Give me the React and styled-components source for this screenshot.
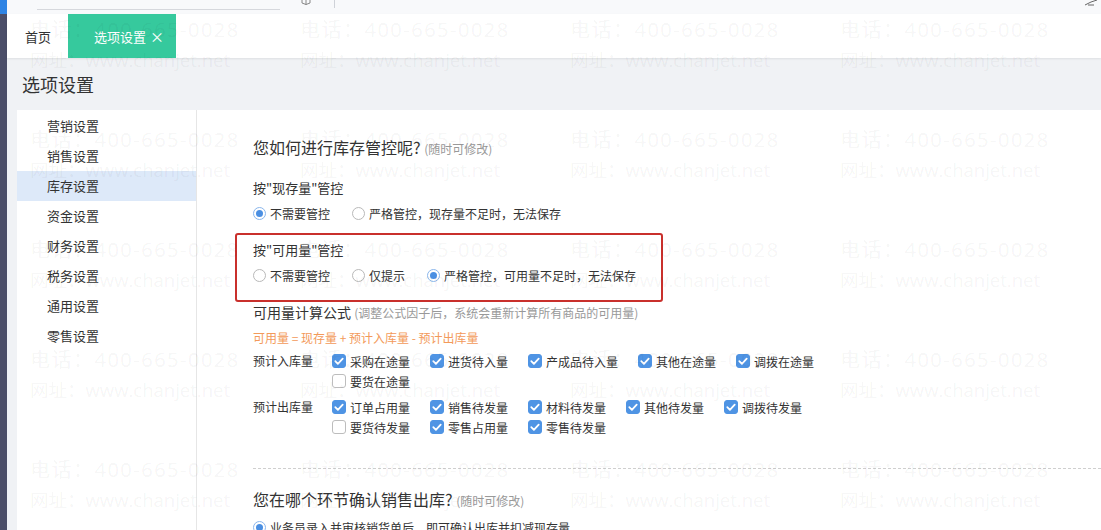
import React from "react";
import styled, { createGlobalStyle } from "styled-components";

const GlobalStyle = createGlobalStyle`
  html, body {
    margin: 0;
    padding: 0;
    height: 530px;
    overflow: hidden;
    background: #f0f2f5;
  }
  body {
    font-family: "Noto Sans CJK SC", "Microsoft YaHei", sans-serif;
    color: #333;
  }
  * { box-sizing: border-box; }
`;

const menus = ["营销设置", "销售设置", "库存设置", "资金设置", "财务设置", "税务设置", "通用设置", "零售设置"];

const inItems = [
  { label: "采购在途量", on: true },
  { label: "进货待入量", on: true },
  { label: "产成品待入量", on: true },
  { label: "其他在途量", on: true },
  { label: "调拨在途量", on: true },
  { label: "要货在途量", on: false },
];

const outItems = [
  { label: "订单占用量", on: true },
  { label: "销售待发量", on: true },
  { label: "材料待发量", on: true },
  { label: "其他待发量", on: true },
  { label: "调拨待发量", on: true },
  { label: "要货待发量", on: false },
  { label: "零售占用量", on: true },
  { label: "零售待发量", on: true },
];

const Radio = ({ checked, children }) => (
  <RadioItem>
    <RadioDot checked={checked} />
    {children}
  </RadioItem>
);

const Check = ({ on, children }) => (
  <CheckItem>
    <CheckBox on={on}>
      {on && (
        <svg viewBox="0 0 14 14" width="14" height="14">
          <path d="M3.3 7.2l2.6 2.6 4.8-5.2" fill="none" stroke="#fff" strokeWidth="1.8" strokeLinecap="round" strokeLinejoin="round" />
        </svg>
      )}
    </CheckBox>
    {children}
  </CheckItem>
);

const App = () => {
  const marks = [];
  for (let r = 0; r < 5; r++) {
    for (let c = 0; c < 4; c++) {
      marks.push(
        <Mark key={`${r}-${c}`}>
          <MarkLine phone>电话：400-665-0028</MarkLine>
          <MarkLine>网址：www.chanjet.net</MarkLine>
        </Mark>
      );
    }
  }

  return (
    <Page>
      <GlobalStyle />
      <LeftRail />
      <Workspace>
        <TopBar>
          <SearchLine />
          <TopGlyph viewBox="0 0 12 6" width="12" height="6">
            <path d="M2 0v3M6 0v5M10 0v3M2 3q4 3 8 0" fill="none" stroke="#888" strokeWidth="1" />
          </TopGlyph>
          <TopSep />
          <Spacer />
          <TopGlyph viewBox="0 0 14 6" width="14" height="6" right>
            <path d="M1 5l6-3 6-2M4 5h6" fill="none" stroke="#666" strokeWidth="1" />
          </TopGlyph>
        </TopBar>

        <TabBar>
          <Tab>首页</Tab>
          <Tab active>
            选项设置 <Close>×</Close>
          </Tab>
        </TabBar>

        <TitleBar>选项设置</TitleBar>

        <Panel>
          <Sidebar>
            {menus.map((m) => (
              <MenuItem key={m} active={m === "库存设置"}>
                {m}
              </MenuItem>
            ))}
          </Sidebar>

          <Main>
            <SectionTitle>
              您如何进行库存管控呢? <Note>(随时可修改)</Note>
            </SectionTitle>

            <GroupLabel>按"现存量"管控</GroupLabel>
            <RadioRow>
              <Radio checked>不需要管控</Radio>
              <Radio>严格管控，现存量不足时，无法保存</Radio>
            </RadioRow>

            <Highlight>
              <GroupLabel flush>按"可用量"管控</GroupLabel>
              <RadioRow>
                <Radio>不需要管控</Radio>
                <Radio>仅提示</Radio>
                <Radio checked>严格管控，可用量不足时，无法保存</Radio>
              </RadioRow>
            </Highlight>

            <FormulaTitle>
              可用量计算公式 <Note>(调整公式因子后，系统会重新计算所有商品的可用量)</Note>
            </FormulaTitle>
            <Formula>可用量 = 现存量 + 预计入库量 - 预计出库量</Formula>

            <CheckGroup>
              <CheckLabel>预计入库量</CheckLabel>
              <CheckList>
                {inItems.map((i) => (
                  <Check key={i.label} on={i.on}>
                    {i.label}
                  </Check>
                ))}
              </CheckList>
            </CheckGroup>
            <CheckGroup spaced>
              <CheckLabel>预计出库量</CheckLabel>
              <CheckList>
                {outItems.map((i) => (
                  <Check key={i.label} on={i.on}>
                    {i.label}
                  </Check>
                ))}
              </CheckList>
            </CheckGroup>

            <Divider />

            <SectionTitle second>
              您在哪个环节确认销售出库? <Note>(随时可修改)</Note>
            </SectionTitle>
            <RadioRow>
              <Radio checked>业务员录入并审核销货单后，即可确认出库并扣减现存量</Radio>
            </RadioRow>
          </Main>
        </Panel>
      </Workspace>

      <Watermark>{marks}</Watermark>
    </Page>
  );
};

const Page = styled.div`
  position: relative;
  display: flex;
  width: 1101px;
  height: 530px;
  overflow: hidden;
`;

const LeftRail = styled.div`
  width: 7px;
  flex-shrink: 0;
  background: linear-gradient(to bottom, #2f84e4 0, #2f84e4 14px, #4b4e68 14px);
`;

const Workspace = styled.div`
  flex: 1;
  display: flex;
  flex-direction: column;
  min-width: 0;
  background: #f0f2f5;
`;

const TopBar = styled.div`
  height: 14px;
  flex-shrink: 0;
  display: flex;
  align-items: flex-start;
  background: #f8f9fb;
  padding-left: 30px;
`;

const SearchLine = styled.div`
  width: 243px;
  height: 10px;
  border-bottom: 1px solid #d6d8dd;
`;

const TopGlyph = styled.svg`
  margin-left: ${(p) => (p.right ? "0" : "20px")};
  margin-right: ${(p) => (p.right ? "3px" : "0")};
`;

const TopSep = styled.div`
  width: 1px;
  height: 8px;
  background: #cfd2d8;
  margin-left: 22px;
`;

const Spacer = styled.div`
  flex: 1;
`;

const TabBar = styled.div`
  height: 44px;
  flex-shrink: 0;
  display: flex;
  background: #fff;
  box-shadow: 0 1px 2px rgba(0, 0, 0, 0.08);
  position: relative;
  z-index: 1;
`;

const Tab = styled.div`
  display: flex;
  align-items: center;
  font-size: 13px;
  padding: ${(p) => (p.active ? "0 12px 0 26px" : "0 17px 0 18px")};
  background: ${(p) => (p.active ? "#36c99d" : "transparent")};
  color: ${(p) => (p.active ? "#fff" : "#333")};
`;

const Close = styled.span`
  margin-left: 4px;
  font-size: 14px;
`;

const TitleBar = styled.div`
  height: 52px;
  flex-shrink: 0;
  display: flex;
  align-items: center;
  padding-left: 15px;
  font-size: 18px;
  color: #333;
`;

const Panel = styled.div`
  flex: 1;
  min-height: 0;
  overflow: hidden;
  display: flex;
  margin-left: 10px;
  background: #fff;
`;

const Sidebar = styled.div`
  width: 180px;
  flex-shrink: 0;
  border-right: 1px solid #e6e6e6;
  padding-top: 1px;
`;

const MenuItem = styled.div`
  height: 30px;
  line-height: 30px;
  padding-left: 30px;
  font-size: 13px;
  color: #333;
  background: ${(p) => (p.active ? "#dde9f9" : "transparent")};
`;

const Main = styled.div`
  flex: 1;
  padding: 26px 0 0 56px;
`;

const SectionTitle = styled.div`
  font-size: 16px;
  line-height: 22px;
  color: #333;
  margin-top: ${(p) => (p.second ? "19px" : "0")};
`;

const Note = styled.span`
  font-size: 12px;
  color: #999;
`;

const GroupLabel = styled.div`
  font-size: 13px;
  line-height: 20px;
  margin-top: ${(p) => (p.flush ? "0" : "18px")};
`;

const RadioRow = styled.div`
  display: flex;
  align-items: center;
  height: 20px;
  margin-top: 5px;
`;

const RadioItem = styled.label`
  display: inline-flex;
  align-items: center;
  gap: 4px;
  font-size: 12px;
  margin-right: 22px;
  color: #333;
`;

const RadioDot = styled.span`
  width: 13px;
  height: 13px;
  border-radius: 50%;
  border: 1px solid ${(p) => (p.checked ? "#8ab6ec" : "#b9b9b9")};
  background: #fff;
  display: inline-flex;
  align-items: center;
  justify-content: center;

  &::after {
    content: "";
    width: 7px;
    height: 7px;
    border-radius: 50%;
    background: ${(p) => (p.checked ? "#4b8fe2" : "transparent")};
  }
`;

const Highlight = styled.div`
  width: 428px;
  margin: 10px 0 0 -18px;
  padding: 5px 0 15px 16px;
  border: 2px solid #c9302c;
  border-radius: 3px;
`;

const FormulaTitle = styled.div`
  font-size: 14px;
  line-height: 20px;
`;

const Formula = styled.div`
  font-size: 12px;
  line-height: 20px;
  color: #f39a5a;
  margin-top: 5px;
`;

const CheckGroup = styled.div`
  display: flex;
  margin-top: ${(p) => (p.spaced ? "6px" : "3px")};
`;

const CheckLabel = styled.div`
  width: 79px;
  flex-shrink: 0;
  font-size: 12px;
  line-height: 20px;
`;

const CheckList = styled.div`
  width: 520px;
  display: flex;
  flex-wrap: wrap;
`;

const CheckItem = styled.label`
  display: inline-flex;
  align-items: center;
  gap: 4px;
  height: 20px;
  font-size: 12px;
  margin-right: 20px;
`;

const CheckBox = styled.span`
  width: 14px;
  height: 14px;
  border-radius: 3px;
  display: inline-flex;
  background: ${(p) => (p.on ? "#4f94e4" : "#fff")};
  border: 1px solid ${(p) => (p.on ? "#4f94e4" : "#bdbdbd")};

  svg {
    margin: -1px;
  }
`;

const Divider = styled.div`
  margin-top: 31px;
  border-top: 1px dashed #cfcfcf;
`;

const Watermark = styled.div`
  position: absolute;
  inset: 0;
  pointer-events: none;
  display: grid;
  grid-template-columns: repeat(4, 270px);
  grid-auto-rows: 110px;
  padding: 15px 0 0 30px;
  z-index: 5;
`;

const Mark = styled.div`
  font-family: "Open Sans", "Noto Sans CJK SC", sans-serif;
  line-height: 30px;
  color: rgba(0, 0, 0, 0.055);
  white-space: nowrap;
`;

const MarkLine = styled.div`
  font-size: ${(p) => (p.phone ? "20px" : "18.5px")};
  letter-spacing: ${(p) => (p.phone ? "1.5px" : "0")};
`;

export default App;
